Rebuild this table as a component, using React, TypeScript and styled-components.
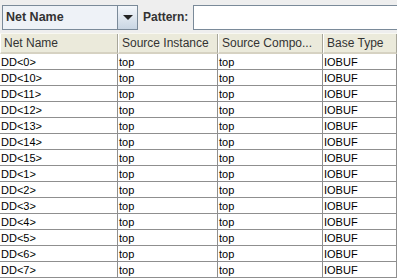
import * as React from 'react';
import styled, { createGlobalStyle } from 'styled-components';

const GlobalStyle = createGlobalStyle`
  html, body {
    margin: 0;
    padding: 0;
    background: #eeeeee;
    overflow: hidden;
  }
`;

const COLS = [118, 100, 105, 74];

const rows = ['0', '10', '11', '12', '13', '14', '15', '1', '2', '3', '4', '5', '6', '7'];

const Frame = styled.div`
  width: 397px;
  height: 278px;
  display: flex;
  flex-direction: column;
  background: #eeeeee;
  font-family: 'Liberation Sans', Arial, sans-serif;
  overflow: hidden;
`;

const FilterBar = styled.div`
  display: flex;
  align-items: center;
  height: 31px;
  padding: 3px 0 0 2px;
  box-sizing: border-box;
  flex-shrink: 0;
`;

const Combo = styled.div`
  display: flex;
  width: 136px;
  height: 25px;
  box-sizing: border-box;
  border: 1px solid #7a8a99;
  background: #ffffff;
`;

const ComboValue = styled.div`
  flex: 1;
  display: flex;
  align-items: center;
  padding-left: 3px;
  font-size: 12.5px;
  font-weight: bold;
  color: #333333;
  background: #eef2f7;
`;

const ComboButton = styled.div`
  width: 19px;
  display: flex;
  align-items: center;
  justify-content: center;
  border-left: 1px solid #7a8a99;
  background: linear-gradient(#f4f7fb, #c9d6e3);
`;

const Arrow = styled.div`
  width: 0;
  height: 0;
  border-left: 5px solid transparent;
  border-right: 5px solid transparent;
  border-top: 5px solid #222222;
`;

const Label = styled.span`
  margin: 0 5px 0 5px;
  font-size: 12px;
  font-weight: bold;
  color: #333333;
`;

const Field = styled.div`
  flex: 1;
  height: 25px;
  box-sizing: border-box;
  border: 1px solid #7a8a99;
  border-right: none;
  background: #ffffff;
`;

const Table = styled.div`
  margin-top: 2px;
  display: flex;
  flex-direction: column;
`;

const HeaderRow = styled.div`
  display: flex;
  height: 21px;
  background: #ebeadb;
  border-top: 1px solid #f8f8f2;
  box-sizing: border-box;
`;

const HeaderCell = styled.div<{ $w: number }>`
  width: ${(p) => p.$w}px;
  flex-shrink: 0;
  box-sizing: border-box;
  padding-left: 3px;
  display: flex;
  align-items: center;
  font-size: 12px;
  color: #333333;
  border-left: 1px solid #ffffff;
  border-right: 1px solid #a7a69a;
  border-bottom: 2px solid #d6d2c2;
  white-space: nowrap;
  overflow: hidden;
`;

const Body = styled.div`
  background: #ffffff;
  display: flex;
  flex-direction: column;
`;

const Row = styled.div`
  display: flex;
  height: 16px;
  box-sizing: border-box;
  border-bottom: 1px solid #8f8f8f;
`;

const Cell = styled.div<{ $w: number }>`
  width: ${(p) => p.$w}px;
  flex-shrink: 0;
  box-sizing: border-box;
  padding-left: 1px;
  display: flex;
  align-items: center;
  font-size: 11px;
  color: #000000;
  border-right: 1px solid #8f8f8f;
  white-space: nowrap;
  overflow: hidden;
`;

export default function App() {
  const headers = ['Net Name', 'Source Instance', 'Source Compo...', 'Base Type'];
  return (
    <Frame>
      <GlobalStyle />
      <FilterBar>
        <Combo>
          <ComboValue>Net Name</ComboValue>
          <ComboButton>
            <Arrow />
          </ComboButton>
        </Combo>
        <Label>Pattern:</Label>
        <Field />
      </FilterBar>
      <Table>
        <HeaderRow>
          {headers.map((h, i) => (
            <HeaderCell key={h} $w={COLS[i]}>
              {h}
            </HeaderCell>
          ))}
        </HeaderRow>
        <Body>
          {rows.map((r) => (
            <Row key={r}>
              <Cell $w={COLS[0]}>{`DD<${r}>`}</Cell>
              <Cell $w={COLS[1]}>top</Cell>
              <Cell $w={COLS[2]}>top</Cell>
              <Cell $w={COLS[3]}>IOBUF</Cell>
            </Row>
          ))}
        </Body>
      </Table>
    </Frame>
  );
}
